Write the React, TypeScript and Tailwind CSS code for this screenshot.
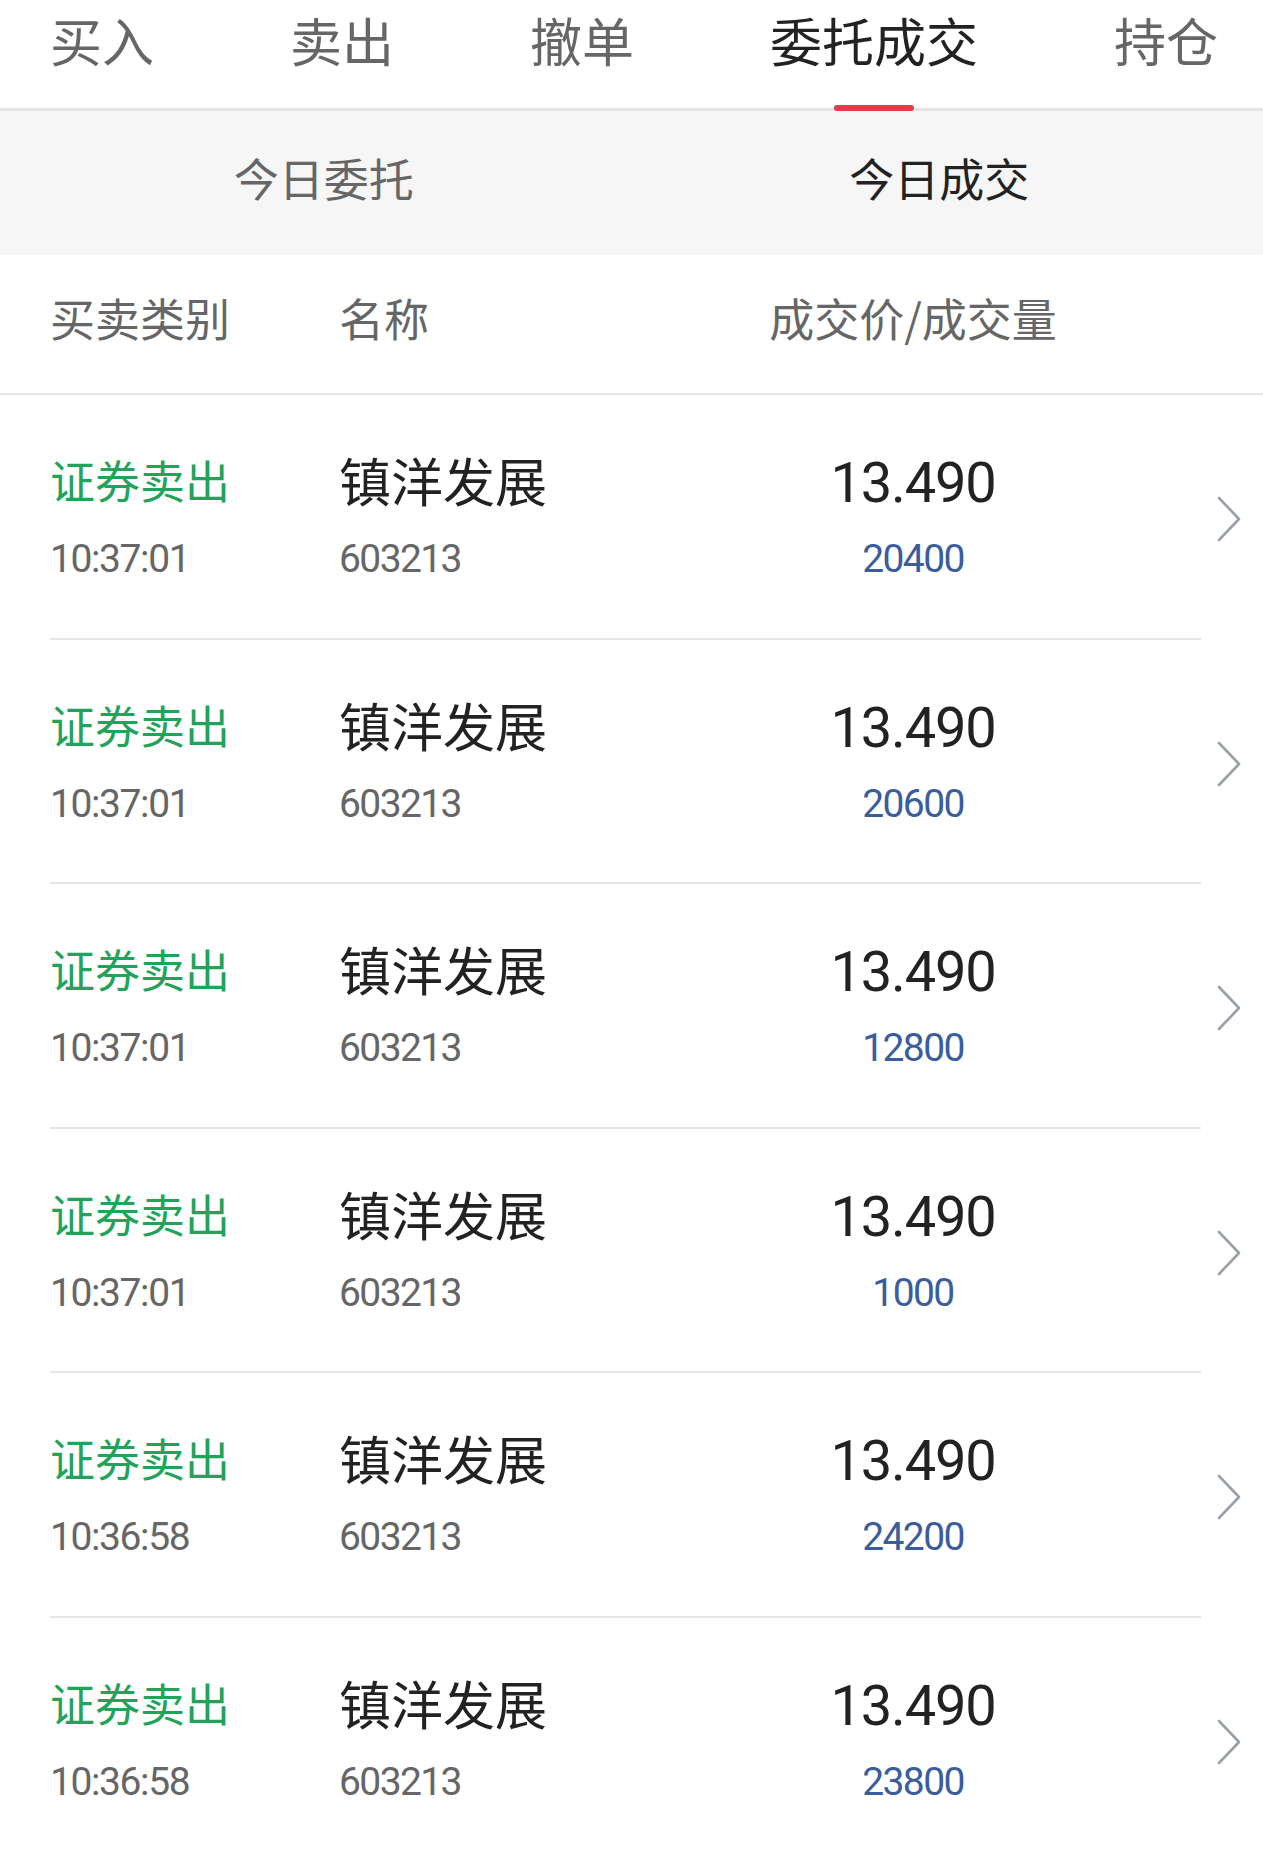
import React from 'react';

const cjk = "font-['Noto_Sans_CJK_SC',sans-serif]";
const num = "font-['Roboto','Noto_Sans_CJK_SC',sans-serif]";

const tabs = ['买入', '卖出', '撤单', '委托成交', '持仓'];

const trades = [
  { time: '10:37:01', volume: '20400' },
  { time: '10:37:01', volume: '20600' },
  { time: '10:37:01', volume: '12800' },
  { time: '10:37:01', volume: '1000' },
  { time: '10:36:58', volume: '24200' },
  { time: '10:36:58', volume: '23800' },
];

const Chevron: React.FC = () => (
  <svg width="24" height="46" viewBox="0 0 24 46" fill="none">
    <path d="M2 2 L22 23 L2 44" stroke="#9aa0aa" strokeWidth={2.6} strokeLinecap="round" strokeLinejoin="round" />
  </svg>
);

const App: React.FC = () => {
  const active = '委托成交';

  return (
    <div className={`h-[1857px] w-full overflow-hidden bg-white ${cjk}`}>
      {/* top tabs */}
      <div className="flex h-[111px] gap-[136px] border-b-[3px] border-[#e7e3e4] pl-[50px]">
        {tabs.map((t) => (
          <div key={t} className="flex h-full flex-col items-center justify-between">
            <span
              className={`pt-[14px] text-[52px] leading-[52px] whitespace-nowrap ${
                t === active ? 'text-[#222222]' : 'text-[#666666]'
              }`}
            >
              {t}
            </span>
            {t === active ? (
              <div className="h-[6px] w-[80px] translate-y-[3px] rounded-full bg-[#e83a4a]" />
            ) : (
              <div className="h-[6px]" />
            )}
          </div>
        ))}
      </div>

      {/* sub tabs */}
      <div className="grid h-[144px] grid-cols-2 bg-[#f6f6f7] px-[16px] pb-[11px]">
        <div className="flex items-center justify-center text-[45px] leading-[56px] text-[#666666]">今日委托</div>
        <div className="flex items-center justify-center text-[45px] leading-[56px] text-[#222222]">今日成交</div>
      </div>

      {/* header */}
      <div className="flex h-[140px] items-center border-b-2 border-[#e8e6e7] pb-[13px] pl-[50px] text-[45px] leading-[56px] text-[#666666]">
        <div className="w-[289px]">买卖类别</div>
        <div className="w-[374px]">名称</div>
        <div className="w-[400px] text-center">成交价/成交量</div>
      </div>

      {/* rows */}
      {trades.map((r, i) => (
        <div key={i} className="flex h-[244.5px] pl-[50px]">
          <div className="flex flex-1 border-b-2 border-[#e8e6e7] pt-[57px]">
            <div className="flex w-[289px] flex-col gap-[26px]">
              <span className="h-[56px] text-[45px] leading-[56px] text-[#22a35a]">证券卖出</span>
              <span className={`h-[50px] text-[39px] leading-[50px] tracking-[-1.4px] text-[#666666] ${num}`}>{r.time}</span>
            </div>
            <div className="flex w-[374px] flex-col gap-[26px]">
              <span className="h-[56px] text-[52px] leading-[56px] text-[#222222]">镇洋发展</span>
              <span className={`h-[50px] text-[39px] leading-[50px] tracking-[-1.6px] text-[#666666] ${num}`}>603213</span>
            </div>
            <div className="flex w-[400px] flex-col items-center gap-[23px]">
              <span className={`mt-[3px] h-[56px] text-[56px] leading-[56px] tracking-[-1.2px] text-[#222222] ${num}`}>13.490</span>
              <span className={`h-[50px] text-[39px] leading-[50px] tracking-[-1.6px] text-[#3b5d9b] ${num}`}>{r.volume}</span>
            </div>
          </div>
          <div className="flex w-[62px] items-center pl-[16px] pt-[4px]">
            <Chevron />
          </div>
        </div>
      ))}
    </div>
  );
};

export default App;
